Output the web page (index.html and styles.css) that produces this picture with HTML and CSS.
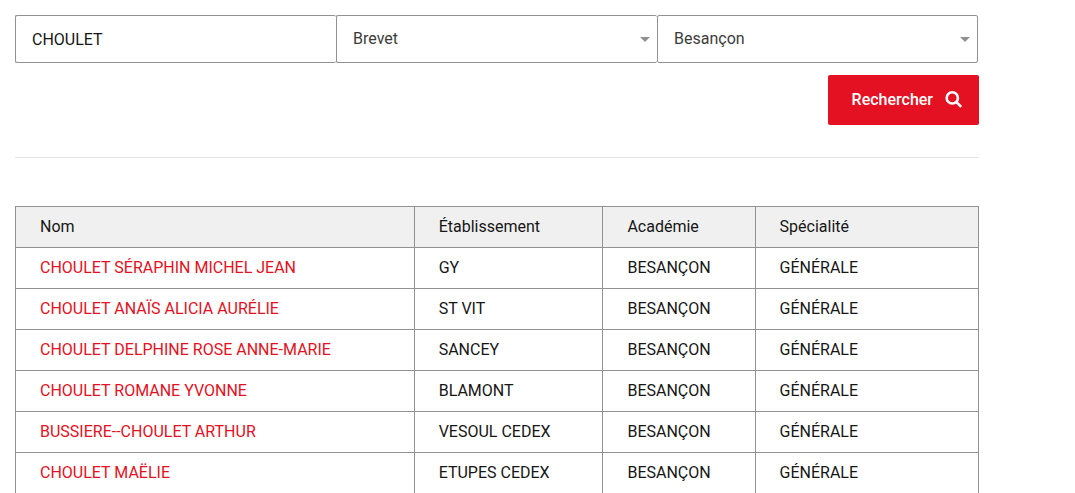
FILE: index.html
```html
<!DOCTYPE html>
<html lang="fr">
<head>
    <meta charset="UTF-8">
    <meta name="viewport" content="width=device-width, initial-scale=1.0">
    <title>Résultats du Brevet</title>
    <link rel="stylesheet" href="styles.css">
</head>
<body>
    <main class="container">
        <form class="search">
            <div class="search-fields">
                <input class="field" type="text" name="nom" value="CHOULET" aria-label="Nom">
                <select class="field field-select" name="examen" aria-label="Examen">
                    <option>Brevet</option>
                </select>
                <select class="field field-select" name="academie" aria-label="Académie">
                    <option>Besançon</option>
                </select>
            </div>
            <button class="search-button" type="submit">
                Rechercher
                <svg class="search-icon" viewBox="0 0 18 18" aria-hidden="true">
                    <circle cx="7.3" cy="6.9" r="5.6"/>
                    <path d="M11.2 10.8L16.2 15.8"/>
                </svg>
            </button>
        </form>

        <table class="results">
            <thead>
                <tr>
                    <th class="col-name">Nom</th>
                    <th class="col-school">Établissement</th>
                    <th class="col-academy">Académie</th>
                    <th>Spécialité</th>
                </tr>
            </thead>
            <tbody>
                <tr>
                    <td><a href="#">CHOULET SÉRAPHIN MICHEL JEAN</a></td>
                    <td>GY</td>
                    <td>BESANÇON</td>
                    <td>GÉNÉRALE</td>
                </tr>
                <tr>
                    <td><a href="#">CHOULET ANAÏS ALICIA AURÉLIE</a></td>
                    <td>ST VIT</td>
                    <td>BESANÇON</td>
                    <td>GÉNÉRALE</td>
                </tr>
                <tr>
                    <td><a href="#">CHOULET DELPHINE ROSE ANNE-MARIE</a></td>
                    <td>SANCEY</td>
                    <td>BESANÇON</td>
                    <td>GÉNÉRALE</td>
                </tr>
                <tr>
                    <td><a href="#">CHOULET ROMANE YVONNE</a></td>
                    <td>BLAMONT</td>
                    <td>BESANÇON</td>
                    <td>GÉNÉRALE</td>
                </tr>
                <tr>
                    <td><a href="#">BUSSIERE--CHOULET ARTHUR</a></td>
                    <td>VESOUL CEDEX</td>
                    <td>BESANÇON</td>
                    <td>GÉNÉRALE</td>
                </tr>
                <tr>
                    <td><a href="#">CHOULET MAËLIE</a></td>
                    <td>ETUPES CEDEX</td>
                    <td>BESANÇON</td>
                    <td>GÉNÉRALE</td>
                </tr>
            </tbody>
        </table>
    </main>
</body>
</html>
```
FILE: styles.css
```css
* {
    box-sizing: border-box;
}

body {
    margin: 0;
    background-color: #fff;
    color: #161616;
    font-family: Roboto, "Liberation Sans", sans-serif;
    font-size: 16px;
    line-height: 24px;
}

.container {
    margin: 0 96px 0 15px;
    padding-top: 15px;
}

.search {
    display: flex;
    flex-direction: column;
    align-items: flex-end;
    gap: 12px;
    padding-bottom: 32px;
    border-bottom: 1px solid #e6e6e6;
}

.search-fields {
    display: grid;
    grid-template-columns: repeat(3, 1fr);
    width: 100%;
    padding-right: 1px;
}

.field {
    min-width: 0;
    height: 48px;
    padding: 0 16px;
    border: 1px solid #929292;
    border-right-width: 0;
    border-radius: 2px;
    background-color: #fff;
    color: #161616;
    font: inherit;
}

.field:last-child {
    border-right-width: 1px;
}

.field-select {
    appearance: none;
    color: #3c3c3c;
    background-image: url("data:image/svg+xml,%3Csvg xmlns='http://www.w3.org/2000/svg' viewBox='0 0 10 5'%3E%3Cpath d='M0 0h10L5 5z' fill='%23929292'/%3E%3C/svg%3E");
    background-repeat: no-repeat;
    background-position: right 7px center;
    background-size: 10px 5px;
}

.search-button {
    display: flex;
    align-items: center;
    gap: 12px;
    height: 50px;
    padding: 0 16px 0 24px;
    border: 0;
    border-radius: 2px;
    background-color: #e31122;
    color: #fff;
    font: inherit;
    font-weight: 500;
    cursor: pointer;
}

.search-icon {
    width: 18px;
    height: 18px;
    fill: none;
    stroke: #fff;
    stroke-width: 2.6;
}

.results {
    width: 100%;
    margin-top: 48px;
    border-collapse: collapse;
    table-layout: fixed;
}

.results th,
.results td {
    padding: 8px 24px;
    border: 1px solid #929292;
    font-weight: 400;
    text-align: left;
}

.results th {
    background-color: #f0f0f0;
}

.results a {
    color: #e31122;
    text-decoration: none;
}

.results a:hover {
    text-decoration: underline;
}

.col-name {
    width: 41.4%;
}

.col-school {
    width: 19.6%;
}

.col-academy {
    width: 15.8%;
}
```
